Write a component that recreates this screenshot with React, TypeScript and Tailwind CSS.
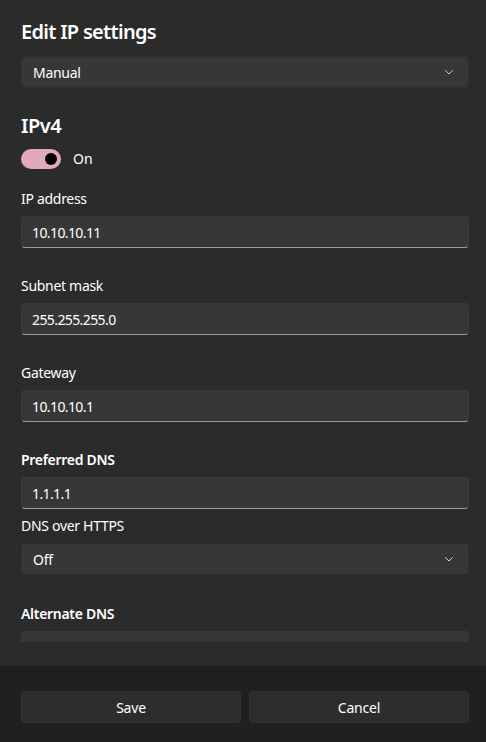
import React from "react";

const font = { fontFamily: '"Segoe UI", "Noto Sans", "Open Sans", sans-serif' };

const Chevron = () => (
  <svg width="10" height="10" viewBox="0 0 10 10" className="text-[#cfcfcf]">
    <path d="M1.5 3.5 L5 7 L8.5 3.5" fill="none" stroke="currentColor" strokeWidth="1" strokeLinecap="round" strokeLinejoin="round" />
  </svg>
);

const Dropdown = ({ value }: { value: string }) => (
  <div className="flex h-8 items-center justify-between rounded-[4px] border border-[#303030] bg-[#373737] pl-[11px] pr-[14px] text-[14px] tracking-[-0.3px] text-white">
    <span>{value}</span>
    <Chevron />
  </div>
);

const TextField = ({ value }: { value: string }) => (
  <div className="flex h-8 items-center rounded-[4px] border border-[#3a3a3a] border-b-[#9a9a9a] bg-[#373737] pl-[10px] text-[14px] tracking-[-0.6px] text-white">
    {value}
  </div>
);

const Field = ({
  label,
  value,
  bold = false,
  className = "",
}: {
  label: string;
  value: string;
  bold?: boolean;
  className?: string;
}) => (
  <div className={`flex flex-col gap-[7px] ${className}`}>
    <label className={`text-[14px] leading-5 tracking-[-0.3px] text-white ${bold ? "font-semibold" : ""}`}>
      {label}
    </label>
    <TextField value={value} />
  </div>
);

export default function App() {
  return (
    <div style={font} className="flex h-[742px] w-[486px] flex-col bg-[#2b2b2b] text-white">
      <div className="h-[666px] pb-6">
        <div className="h-full overflow-hidden pl-[21px] pr-[17px] pt-[18px]">
          <h1 className="text-[20px] font-semibold leading-7 tracking-[-0.7px]">Edit IP settings</h1>
          <div className="mt-[10px]">
            <Dropdown value="Manual" />
          </div>
          <h2 className="mt-[24px] text-[20px] font-semibold leading-7 tracking-[-0.5px]">IPv4</h2>
          <div className="mt-[8px] flex items-center gap-3">
            <div className="flex h-5 w-10 items-center justify-end rounded-full bg-[#e0a9bc] pr-[4px]">
              <div className="h-3 w-3 rounded-full bg-black" />
            </div>
            <span className="text-[14px]">On</span>
          </div>
          <Field label="IP address" value="10.10.10.11" className="mt-[20px]" />
          <Field label="Subnet mask" value="255.255.255.0" className="mt-[28px]" />
          <Field label="Gateway" value="10.10.10.1" className="mt-[28px]" />
          <Field label="Preferred DNS" value="1.1.1.1" bold className="mt-[28px]" />
          <div className="mt-[7px] flex flex-col gap-[7px]">
            <label className="text-[14px] leading-5 tracking-[-0.3px]">DNS over HTTPS</label>
            <Dropdown value="Off" />
          </div>
          <Field label="Alternate DNS" value="" bold className="mt-[29px]" />
        </div>
      </div>
      <div className="flex flex-1 gap-2 border-t border-[#1c1c1c] bg-[#202020] pl-[21px] pr-[17px] pt-6">
        <button className="h-8 flex-1 rounded-[4px] border border-[#303030] bg-[#2d2d2d] text-[14px] tracking-[-0.2px] text-white">
          Save
        </button>
        <button className="h-8 flex-1 rounded-[4px] border border-[#303030] bg-[#2d2d2d] text-[14px] tracking-[-0.2px] text-white">
          Cancel
        </button>
      </div>
    </div>
  );
}
